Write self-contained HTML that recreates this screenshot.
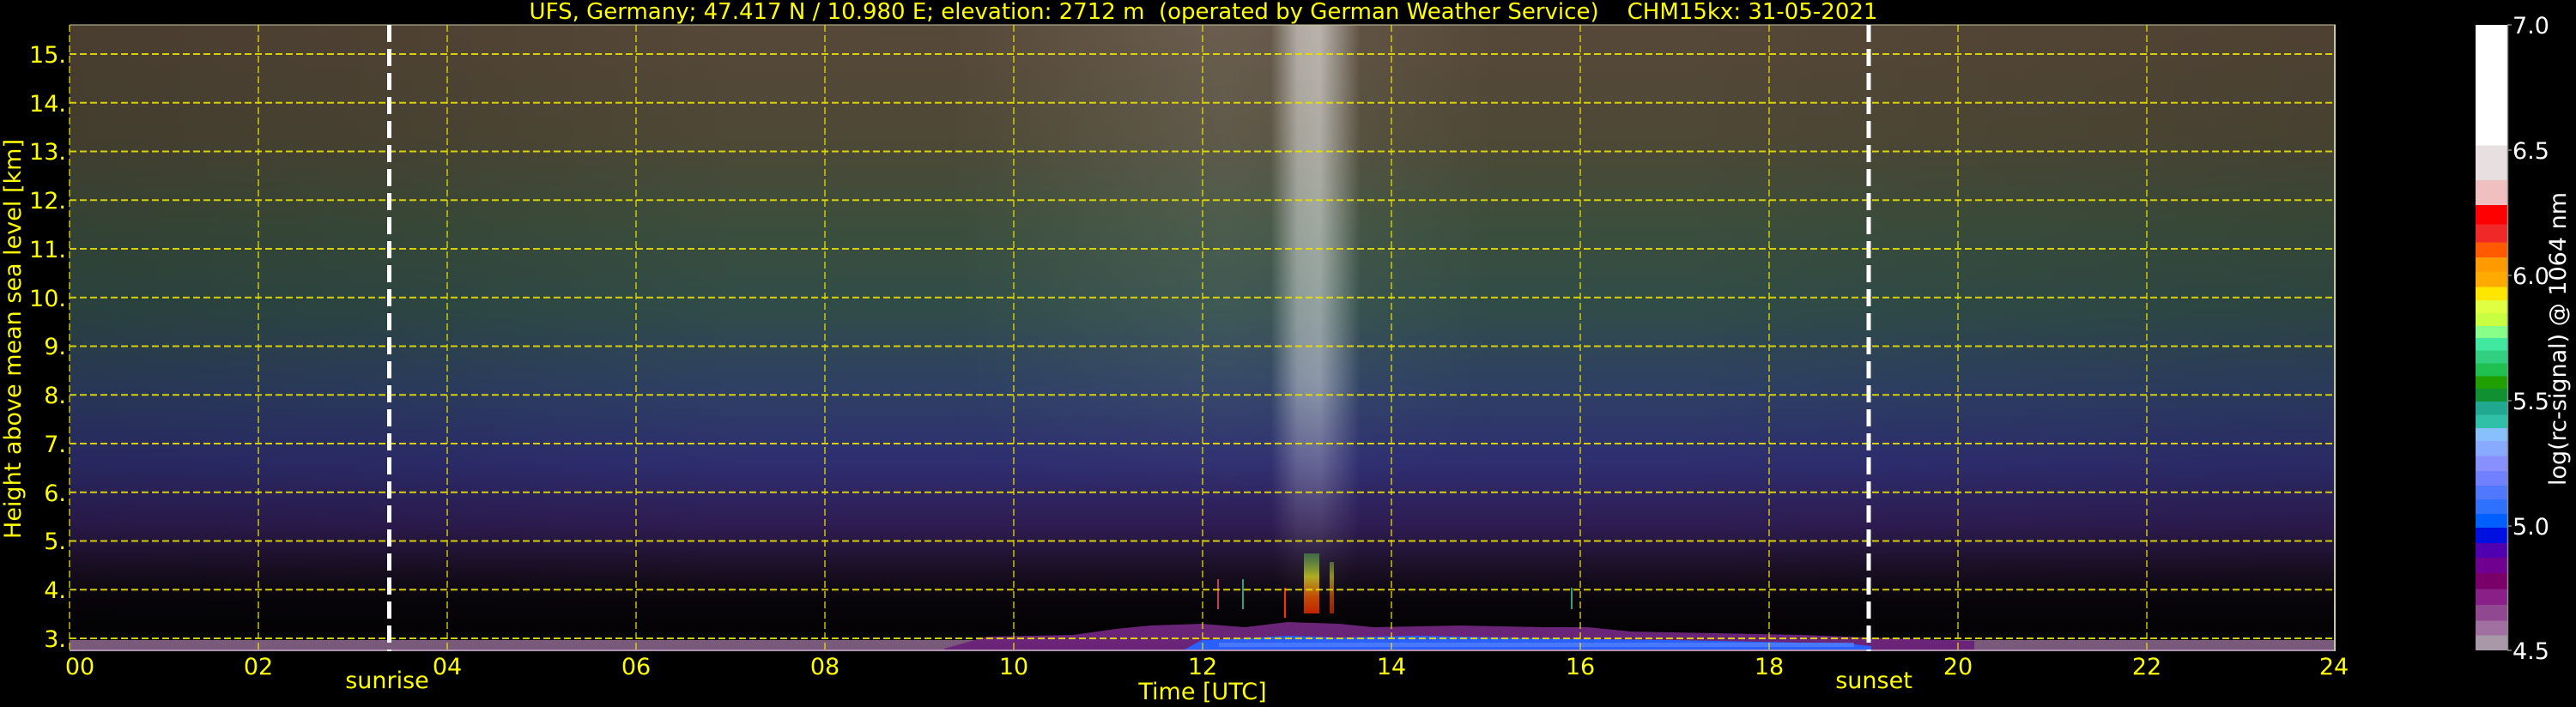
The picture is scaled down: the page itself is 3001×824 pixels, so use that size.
<!DOCTYPE html>
<html><head><meta charset="utf-8"><style>
html,body{margin:0;padding:0;background:#000;}
svg{display:block;}
text{font-family:"DejaVu Sans","Liberation Sans",sans-serif;}
</style></head><body>
<svg width="3001" height="824" viewBox="0 0 3001 824" xmlns="http://www.w3.org/2000/svg">
<defs>
<linearGradient id="sky" x1="0" y1="29" x2="0" y2="759" gradientUnits="userSpaceOnUse">
<stop offset="0" stop-color="#574838"/>
<stop offset="0.18" stop-color="#4e4836"/>
<stop offset="0.32" stop-color="#3c4e3c"/>
<stop offset="0.45" stop-color="#304c48"/>
<stop offset="0.58" stop-color="#2e4064"/>
<stop offset="0.70" stop-color="#2e2e70"/>
<stop offset="0.80" stop-color="#2e1c52"/>
<stop offset="0.87" stop-color="#1a0f24"/>
<stop offset="0.92" stop-color="#08050a"/>
<stop offset="0.97" stop-color="#030203"/>
<stop offset="1" stop-color="#000"/>
</linearGradient>
<linearGradient id="hz" x1="81" y1="0" x2="2721" y2="0" gradientUnits="userSpaceOnUse">
<stop offset="0" stop-color="#000" stop-opacity="0.15"/>
<stop offset="0.14" stop-color="#000" stop-opacity="0.1"/>
<stop offset="0.3" stop-color="#000" stop-opacity="0"/>
<stop offset="0.7" stop-color="#000" stop-opacity="0"/>
<stop offset="0.85" stop-color="#000" stop-opacity="0.05"/>
<stop offset="1" stop-color="#000" stop-opacity="0.1"/>
</linearGradient>
<linearGradient id="wh" x1="1480" y1="0" x2="1585" y2="0" gradientUnits="userSpaceOnUse">
<stop offset="0" stop-color="#fff" stop-opacity="0"/>
<stop offset="0.3" stop-color="#fff" stop-opacity="0.5"/>
<stop offset="0.55" stop-color="#fff" stop-opacity="0.55"/>
<stop offset="1" stop-color="#fff" stop-opacity="0"/>
</linearGradient>
<linearGradient id="wv" x1="0" y1="29" x2="0" y2="720" gradientUnits="userSpaceOnUse">
<stop offset="0" stop-color="#fff" stop-opacity="1"/>
<stop offset="0.6" stop-color="#fff" stop-opacity="0.8"/>
<stop offset="0.9" stop-color="#fff" stop-opacity="0.1"/>
<stop offset="1" stop-color="#fff" stop-opacity="0"/>
</linearGradient>
<mask id="wm"><rect x="1480" y="29" width="105" height="700" fill="url(#wv)"/></mask>
<linearGradient id="wwh" x1="1100" y1="0" x2="1750" y2="0" gradientUnits="userSpaceOnUse">
<stop offset="0" stop-color="#fff" stop-opacity="0"/>
<stop offset="0.5" stop-color="#fff" stop-opacity="0.12"/>
<stop offset="1" stop-color="#fff" stop-opacity="0"/>
</linearGradient>
<linearGradient id="wwv" x1="0" y1="29" x2="0" y2="600" gradientUnits="userSpaceOnUse">
<stop offset="0" stop-color="#fff" stop-opacity="1"/>
<stop offset="0.6" stop-color="#fff" stop-opacity="0.6"/>
<stop offset="1" stop-color="#fff" stop-opacity="0"/>
</linearGradient>
<mask id="wwm"><rect x="1100" y="29" width="650" height="580" fill="url(#wwv)"/></mask>
<linearGradient id="cb" x1="0" y1="29" x2="0" y2="758" gradientUnits="userSpaceOnUse">
<stop offset="0" stop-color="#ffffff"/><stop offset="0.1924" stop-color="#ffffff"/>
<stop offset="0.1924" stop-color="#e8e0e0"/><stop offset="0.2485" stop-color="#e8e0e0"/>
<stop offset="0.2485" stop-color="#f0c0c0"/><stop offset="0.2882" stop-color="#f0c0c0"/>
<stop offset="0.2882" stop-color="#ff0000"/><stop offset="0.3192" stop-color="#ff0000"/>
<stop offset="0.3192" stop-color="#f02828"/><stop offset="0.3480" stop-color="#f02828"/>
<stop offset="0.3480" stop-color="#ff5a00"/><stop offset="0.3718" stop-color="#ff5a00"/>
<stop offset="0.3718" stop-color="#ff9a00"/><stop offset="0.3948" stop-color="#ff9a00"/>
<stop offset="0.3948" stop-color="#ffaa00"/><stop offset="0.4193" stop-color="#ffaa00"/>
<stop offset="0.4193" stop-color="#ffe600"/><stop offset="0.4403" stop-color="#ffe600"/>
<stop offset="0.4403" stop-color="#e0ff40"/><stop offset="0.4611" stop-color="#e0ff40"/>
<stop offset="0.4611" stop-color="#c8ff40"/><stop offset="0.4813" stop-color="#c8ff40"/>
<stop offset="0.4813" stop-color="#88ff88"/><stop offset="0.5007" stop-color="#88ff88"/>
<stop offset="0.5007" stop-color="#40e8a0"/><stop offset="0.5209" stop-color="#40e8a0"/>
<stop offset="0.5209" stop-color="#30d080"/><stop offset="0.5411" stop-color="#30d080"/>
<stop offset="0.5411" stop-color="#20c050"/><stop offset="0.5620" stop-color="#20c050"/>
<stop offset="0.5620" stop-color="#20a000"/><stop offset="0.5814" stop-color="#20a000"/>
<stop offset="0.5814" stop-color="#109030"/><stop offset="0.6023" stop-color="#109030"/>
<stop offset="0.6023" stop-color="#20a890"/><stop offset="0.6232" stop-color="#20a890"/>
<stop offset="0.6232" stop-color="#30c0a8"/><stop offset="0.6448" stop-color="#30c0a8"/>
<stop offset="0.6448" stop-color="#88c0ff"/><stop offset="0.6650" stop-color="#88c0ff"/>
<stop offset="0.6650" stop-color="#88aaff"/><stop offset="0.6895" stop-color="#88aaff"/>
<stop offset="0.6895" stop-color="#8890ff"/><stop offset="0.7133" stop-color="#8890ff"/>
<stop offset="0.7133" stop-color="#7080ff"/><stop offset="0.7363" stop-color="#7080ff"/>
<stop offset="0.7363" stop-color="#5078ff"/><stop offset="0.7586" stop-color="#5078ff"/>
<stop offset="0.7586" stop-color="#3070ff"/><stop offset="0.7817" stop-color="#3070ff"/>
<stop offset="0.7817" stop-color="#0060ff"/><stop offset="0.8040" stop-color="#0060ff"/>
<stop offset="0.8040" stop-color="#0010e0"/><stop offset="0.8285" stop-color="#0010e0"/>
<stop offset="0.8285" stop-color="#5000b0"/><stop offset="0.8516" stop-color="#5000b0"/>
<stop offset="0.8516" stop-color="#700090"/><stop offset="0.8768" stop-color="#700090"/>
<stop offset="0.8768" stop-color="#780068"/><stop offset="0.9020" stop-color="#780068"/>
<stop offset="0.9020" stop-color="#882088"/><stop offset="0.9272" stop-color="#882088"/>
<stop offset="0.9272" stop-color="#904890"/><stop offset="0.9524" stop-color="#904890"/>
<stop offset="0.9524" stop-color="#a070a0"/><stop offset="0.9762" stop-color="#a070a0"/>
<stop offset="0.9762" stop-color="#a898a8"/><stop offset="1" stop-color="#a898a8"/>
</linearGradient>
<linearGradient id="plume" x1="0" y1="640" x2="0" y2="720" gradientUnits="userSpaceOnUse">
<stop offset="0" stop-color="#40c060" stop-opacity="0.5"/><stop offset="0.4" stop-color="#e0e020"/>
<stop offset="0.7" stop-color="#ff6000"/><stop offset="1" stop-color="#ff2000"/>
</linearGradient>
</defs>

<rect x="81" y="29" width="2640" height="730" fill="url(#sky)"/>
<rect x="81" y="29" width="2640" height="730" fill="url(#hz)"/>
<rect x="1100" y="29" width="650" height="580" fill="url(#wwh)" mask="url(#wwm)"/>
<rect x="1480" y="29" width="105" height="700" fill="url(#wh)" mask="url(#wm)"/>

<rect x="1519" y="645" width="18" height="70" fill="url(#plume)" opacity="0.75"/>
<rect x="1549" y="655" width="5" height="60" fill="url(#plume)" opacity="0.6"/>
<rect x="1496" y="685" width="2" height="35" fill="#ff3000"/>
<rect x="1418" y="675" width="2" height="35" fill="#c04060"/>
<rect x="1447" y="675" width="2" height="35" fill="#30a080"/>
<rect x="1830" y="685" width="2" height="25" fill="#30a080"/>

<rect x="81" y="746" width="2640" height="11" fill="#7a5a7a"/>
<polygon points="1100,756 1150,742 1250,740 1300,733 1340,729 1400,727 1450,731 1500,725 1560,727 1600,731 1700,729 1800,731 1850,731 1900,736 2000,738 2100,740 2200,744 2300,747 2300,757 1100,757" fill="#6a2478"/>
<polygon points="1380,757 1400,746 1450,744 1500,741 1560,743 1650,741 1750,743 1850,745 1950,746 2050,748 2150,750 2180,753 2180,757" fill="#2a60ff"/>
<rect x="1420" y="749" width="740" height="5" fill="#5080ff" opacity="0.8"/>
<rect x="81" y="757" width="2640" height="2" fill="#b090b0"/>

<g stroke="#e8e000" stroke-width="2" stroke-dasharray="8,4" opacity="0.9">
<line x1="81" y1="744" x2="2721" y2="744"/>
<line x1="81" y1="687.3" x2="2721" y2="687.3"/>
<line x1="81" y1="630.5" x2="2721" y2="630.5"/>
<line x1="81" y1="573.8" x2="2721" y2="573.8"/>
<line x1="81" y1="517" x2="2721" y2="517"/>
<line x1="81" y1="460.3" x2="2721" y2="460.3"/>
<line x1="81" y1="403.5" x2="2721" y2="403.5"/>
<line x1="81" y1="346.8" x2="2721" y2="346.8"/>
<line x1="81" y1="290" x2="2721" y2="290"/>
<line x1="81" y1="233.3" x2="2721" y2="233.3"/>
<line x1="81" y1="176.5" x2="2721" y2="176.5"/>
<line x1="81" y1="119.8" x2="2721" y2="119.8"/>
<line x1="81" y1="63" x2="2721" y2="63"/>
</g>
<g stroke="#e8e000" stroke-width="1.5" stroke-dasharray="8,4" opacity="0.85">
<line x1="81" y1="29" x2="81" y2="759"/>
<line x1="301" y1="29" x2="301" y2="759"/>
<line x1="521" y1="29" x2="521" y2="759"/>
<line x1="741" y1="29" x2="741" y2="759"/>
<line x1="961" y1="29" x2="961" y2="759"/>
<line x1="1181" y1="29" x2="1181" y2="759"/>
<line x1="1401" y1="29" x2="1401" y2="759"/>
<line x1="1621" y1="29" x2="1621" y2="759"/>
<line x1="1841" y1="29" x2="1841" y2="759"/>
<line x1="2061" y1="29" x2="2061" y2="759"/>
<line x1="2281" y1="29" x2="2281" y2="759"/>
<line x1="2501" y1="29" x2="2501" y2="759"/>
</g>
<line x1="2720" y1="29" x2="2720" y2="759" stroke="#c8c8a0" stroke-width="2"/>
<line x1="81" y1="29" x2="2721" y2="29" stroke="#c8c8a0" stroke-width="1"/>

<g stroke="#fff" stroke-width="5" stroke-dasharray="20,8">
<line x1="453.5" y1="29" x2="453.5" y2="759"/>
<line x1="2177" y1="29" x2="2177" y2="759"/>
</g>

<text x="1402" y="22" fill="#ffff00" font-size="26" text-anchor="middle" xml:space="preserve">UFS, Germany; 47.417 N / 10.980 E; elevation: 2712 m  (operated by German Weather Service)    CHM15kx: 31-05-2021</text>

<g fill="#ffff00" font-size="27" text-anchor="end">
<text x="77" y="754">3.</text>
<text x="77" y="697">4.</text>
<text x="77" y="640">5.</text>
<text x="77" y="584">6.</text>
<text x="77" y="527">7.</text>
<text x="77" y="470">8.</text>
<text x="77" y="413">9.</text>
<text x="77" y="357">10.</text>
<text x="77" y="300">11.</text>
<text x="77" y="243">12.</text>
<text x="77" y="186">13.</text>
<text x="77" y="130">14.</text>
<text x="77" y="73">15.</text>
</g>
<text transform="translate(24,395) rotate(-90)" fill="#ffff00" font-size="27" text-anchor="middle">Height above mean sea level [km]</text>

<g fill="#ffff00" font-size="27" text-anchor="middle">
<text x="93" y="786">00</text>
<text x="301" y="786">02</text>
<text x="521" y="786">04</text>
<text x="741" y="786">06</text>
<text x="961" y="786">08</text>
<text x="1181" y="786">10</text>
<text x="1401" y="786">12</text>
<text x="1621" y="786">14</text>
<text x="1841" y="786">16</text>
<text x="2061" y="786">18</text>
<text x="2281" y="786">20</text>
<text x="2501" y="786">22</text>
<text x="2719" y="786">24</text>
<text x="451" y="802">sunrise</text>
<text x="2183" y="802">sunset</text>
<text x="1401" y="815">Time [UTC]</text>
</g>

<rect x="2884" y="29" width="37" height="729" fill="url(#cb)"/>
<line x1="2921.5" y1="29" x2="2921.5" y2="758" stroke="#888" stroke-width="1.5"/>
<g stroke="#888" stroke-width="1.5">
<line x1="2921" y1="29" x2="2926" y2="29"/><line x1="2921" y1="175" x2="2926" y2="175"/>
<line x1="2921" y1="321" x2="2926" y2="321"/><line x1="2921" y1="467" x2="2926" y2="467"/>
<line x1="2921" y1="613" x2="2926" y2="613"/><line x1="2921" y1="758" x2="2926" y2="758"/>
</g>
<g fill="#fff" font-size="27">
<text x="2927" y="39">7.0</text>
<text x="2927" y="185">6.5</text>
<text x="2927" y="331">6.0</text>
<text x="2927" y="477">5.5</text>
<text x="2927" y="623">5.0</text>
<text x="2927" y="768">4.5</text>
</g>
<text transform="translate(2989,395) rotate(-90)" fill="#fff" font-size="27" text-anchor="middle">log(rc-signal) @ 1064 nm</text>
</svg>
</body></html>
